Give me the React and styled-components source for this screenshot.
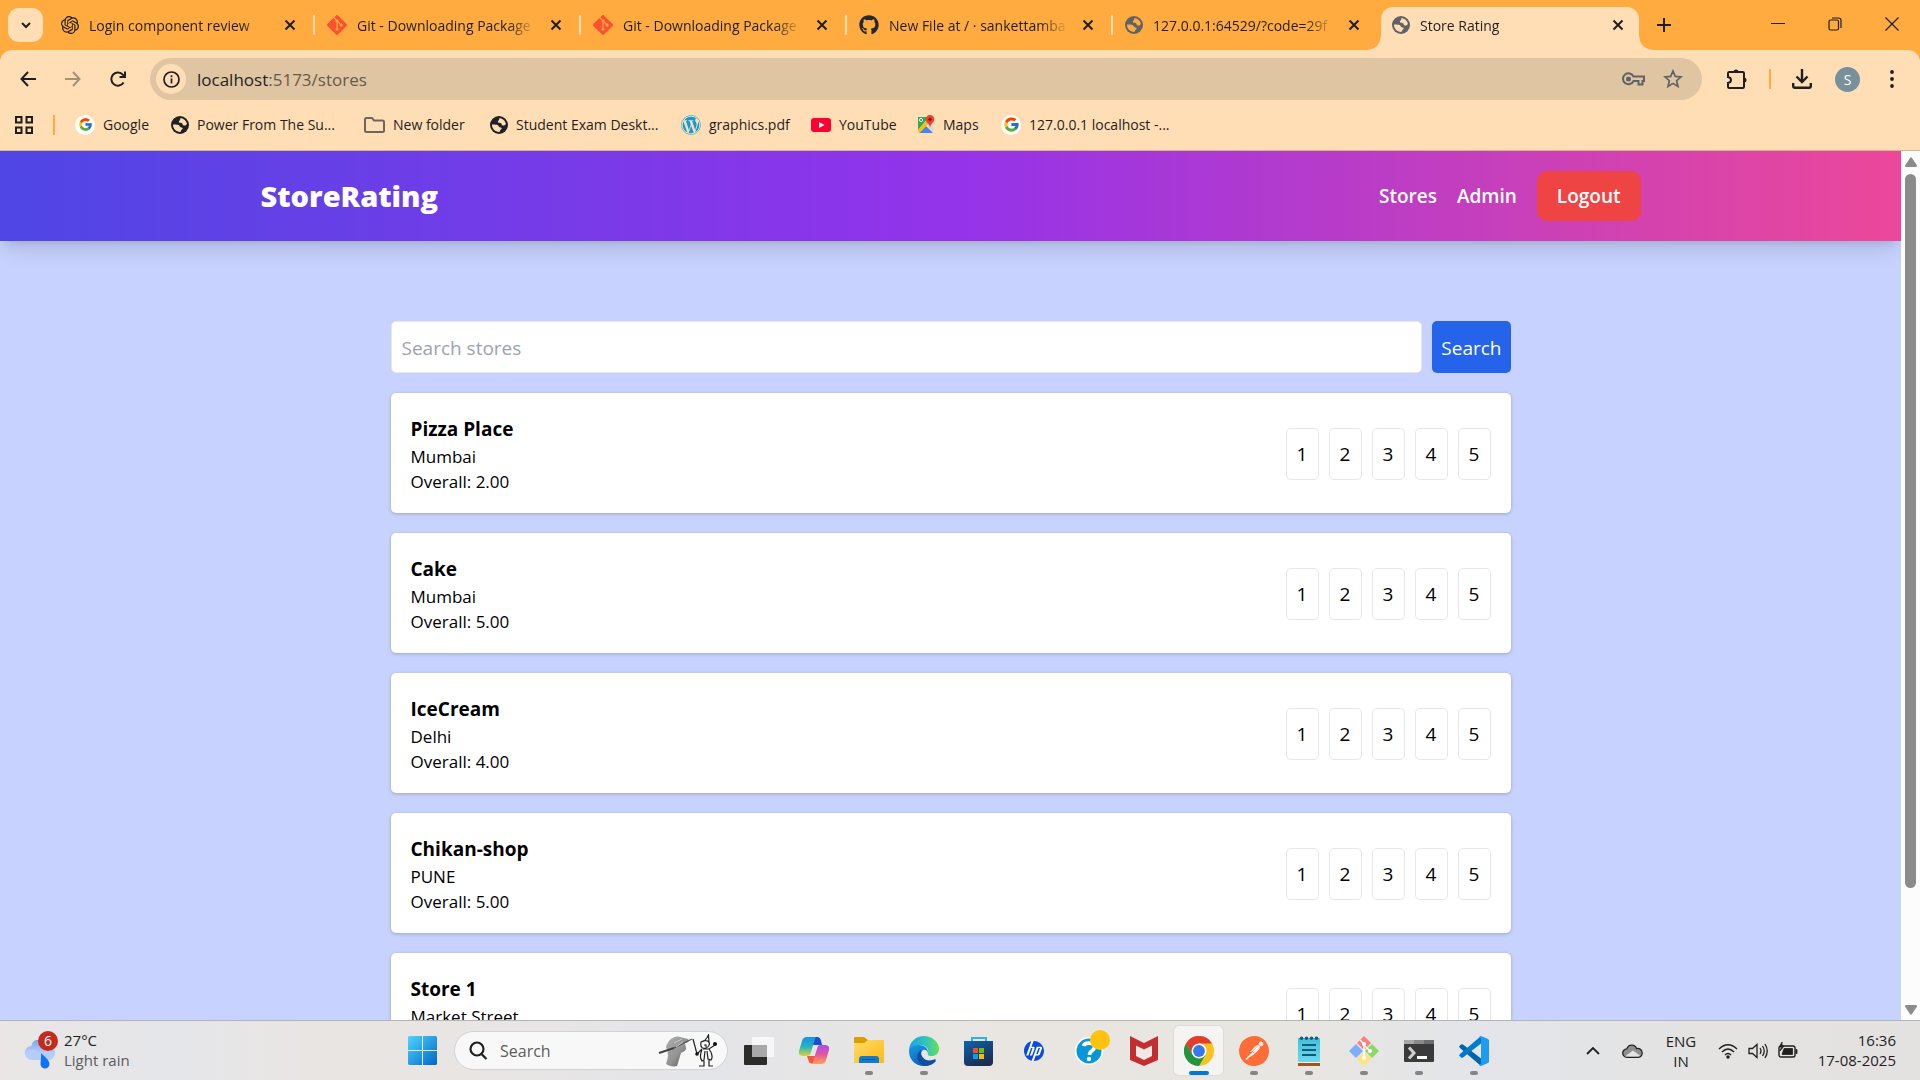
import React from "react";
import styled, { createGlobalStyle } from "styled-components";
import { FcGoogle } from "react-icons/fc";
import { FaGithub, FaWordpress } from "react-icons/fa";
import { SiGit, SiOpenai, SiHp, SiPostman } from "react-icons/si";

const ui = `"Segoe UI", "Open Sans", "Noto Sans", sans-serif`;
const ink = "#1f1f1f";

const GlobalStyle = createGlobalStyle`
  *, *::before, *::after { box-sizing: border-box; }
  body { margin: 0; font-family: ${ui}; color: #000; overflow: hidden; }
  button, input { font: inherit; color: inherit; margin: 0; }
  button { border: 0; background: none; padding: 0; cursor: pointer; }
  a { color: inherit; text-decoration: none; }
  h1, h2, p, ul { margin: 0; padding: 0; }
  ul { list-style: none; }
  svg { display: block; flex: none; }
`;

const Desktop = styled.div`
  display: flex;
  flex-direction: column;
  height: 100vh;
`;

/* ---------- browser tab strip ---------- */
const TabStrip = styled.header`
  display: flex;
  align-items: flex-end;
  flex: none;
  height: 50px;
  padding-left: 8px;
  background: #ffab40;
  color: ${ink};
`;
const TabSearch = styled.button`
  display: grid;
  place-items: center;
  width: 35px;
  height: 34px;
  margin: 0 6px 8px 0;
  border-radius: 11px;
  background: #ffdeb5;
`;
const Tab = styled.div`
  position: relative;
  display: flex;
  align-items: center;
  flex: 0 1 266px;
  min-width: 0;
  height: 43px;
  padding: 0 17px 7px 12px;
  font-size: 14px;
  &::after {
    content: "";
    width: 2px;
    height: 20px;
    border-radius: 1px;
    background: ${(p) => (p.$last ? "transparent" : "#ffdeb5")};
    position: absolute;
    right: 0;
  }
`;
const ActiveTab = styled(Tab)`
  flex: 0 1 258px;
  margin: 0 10px 0 2px;
  padding: 0 13px 7px 11px;
  border-radius: 12px 12px 0 0;
  background: #ffdeb5;
  &::before, &::after {
    content: "";
    position: absolute;
    bottom: 0;
    width: 13px;
    height: 13px;
    border-radius: 0;
  }
  &::before { left: -13px; background: radial-gradient(circle at 0 0, transparent 12px, #ffdeb5 13px); }
  &::after { right: -13px; background: radial-gradient(circle at 100% 0, transparent 12px, #ffdeb5 13px); }
`;
const TabTitle = styled.span`
  flex: 1;
  min-width: 0;
  margin: 0 12px 0 10px;
  overflow: hidden;
  white-space: nowrap;
  -webkit-mask-image: linear-gradient(to right, #000 calc(100% - 28px), transparent);
  mask-image: linear-gradient(to right, #000 calc(100% - 28px), transparent);
`;
const IconButton = styled.button`
  display: grid;
  place-items: center;
  flex: none;
  width: ${(p) => p.$w || 16}px;
  height: ${(p) => p.$h || 20}px;
`;
const WindowControls = styled.div`
  display: flex;
  margin-left: auto;
  height: 50px;
`;

/* ---------- toolbar ---------- */
const ToolbarBack = styled.div`
  flex: none;
  background: #ffab40;
`;
const Toolbar = styled.div`
  border-bottom: 1px solid #d5b68f;
  border-radius: 12px 12px 0 0;
  background: #ffdeb5;
  color: ${ink};
`;
const AddressRow = styled.div`
  display: flex;
  align-items: center;
  height: 58px;
  padding: 0 11px 0 5px;
`;
const AddressBox = styled.div`
  display: flex;
  align-items: center;
  flex: 1;
  height: 42px;
  margin-left: 10px;
  padding: 0 9px 0 6px;
  border-radius: 21px;
  background: #dfc5a2;
`;
const SiteInfo = styled.button`
  display: grid;
  place-items: center;
  width: 30px;
  height: 30px;
  border-radius: 50%;
  background: #ffdeb5;
`;
const Address = styled.div`
  flex: 1;
  padding-left: 11px;
  font-size: 17px;
  span { color: #685a4a; }
`;
const ToolbarActions = styled.div`
  display: flex;
  align-items: center;
  margin-left: 13px;
`;
const Divider = styled.span`
  flex: none;
  width: 2px;
  height: 20px;
  margin: 0 ${(p) => p.$gap}px;
  background: #ffab40;
`;
const Avatar = styled.button`
  width: 25px;
  height: 25px;
  margin: 0 15px 0 12px;
  border-radius: 50%;
  background: #78909c;
  color: #fff;
  font-size: 14px;
  line-height: 25px;
`;
const Bookmarks = styled.nav`
  display: flex;
  align-items: center;
  height: 33px;
  padding-left: 15px;
  margin-bottom: 9px;
  font-size: 14px;
  white-space: nowrap;
`;
const Bookmark = styled.a`
  display: flex;
  align-items: center;
  gap: 8px;
  flex: none;
  width: ${(p) => p.$w}px;
`;
const White = styled.span`
  display: grid;
  place-items: center;
  width: ${(p) => p.$s || 20}px;
  height: ${(p) => p.$s || 20}px;
  border-radius: 50%;
  background: #fff;
`;

/* ---------- page ---------- */
const Viewport = styled.div`
  display: flex;
  flex: 1;
  min-height: 0;
  background: #c7d2fe;
`;
const Page = styled.div`
  flex: 1;
  min-width: 0;
  overflow: hidden;
`;
const NavBar = styled.nav`
  padding: 20px;
  background: linear-gradient(to right, #4f46e5, #9333ea, #ec4899);
  box-shadow: 0 12px 19px -4px rgba(0, 0, 0, 0.12), 0 5px 8px -5px rgba(0, 0, 0, 0.12);
`;
const NavInner = styled.div`
  display: flex;
  align-items: center;
  justify-content: space-between;
  max-width: 1380px;
  margin: 0 auto;
  color: #fff;
`;
const Brand = styled.a`
  font-size: 29px;
  font-weight: 800;
  line-height: 40px;
`;
const NavLinks = styled.div`
  display: flex;
  align-items: center;
  gap: 20px;
  font-size: 19px;
  font-weight: 600;
`;
const Logout = styled.button`
  height: 50px;
  padding: 0 20px;
  border-radius: 10px;
  background: #ef4444;
`;
const Main = styled.main`
  display: grid;
  gap: 20px;
  max-width: 1160px;
  margin: 0 auto;
  padding: 80px 20px 20px;
`;
const SearchForm = styled.form`
  display: flex;
  gap: 10px;
  font-size: 19px;
`;
const SearchInput = styled.input`
  flex: 1;
  min-width: 0;
  height: 52px;
  padding: 1px 10px 0;
  border: 1px solid #e5e7eb;
  border-radius: 5px;
  background: #fff;
  &::placeholder { color: #9ca3af; opacity: 1; }
`;
const SearchButton = styled.button`
  padding: 1px 9px 0;
  border-radius: 5px;
  background: #2563eb;
  color: #fff;
`;
const Card = styled.li`
  display: flex;
  align-items: center;
  justify-content: space-between;
  padding: 21px 20px 19px;
  border-radius: 5px;
  background: #fff;
  box-shadow: 0 1px 4px rgba(0, 0, 0, 0.12), 0 1px 3px rgba(0, 0, 0, 0.1);
`;
const CardList = styled.ul`
  display: grid;
  gap: 20px;
`;
const StoreName = styled.h2`
  font-size: 19px;
  font-weight: 700;
  line-height: 30px;
`;
const StoreLine = styled.p`
  font-size: 17px;
  line-height: 25px;
`;
const Ratings = styled.div`
  display: flex;
  gap: 10px;
`;
const RateButton = styled.button`
  width: 33px;
  height: 52px;
  border: 1px solid #e5e7eb;
  border-radius: 5px;
  font-size: 19px;
`;
const ScrollTrack = styled.div`
  display: flex;
  flex-direction: column;
  align-items: center;
  flex: none;
  width: 19px;
  padding: 6px 0 5px;
  background: #fcfcfc;
`;
const ScrollThumb = styled.div`
  width: 11px;
  flex: 714 1 0;
  margin-top: 7px;
  border-radius: 6px;
  background: #8b8b8b;
`;
const ScrollRest = styled.div`
  flex: 117 1 0;
`;

/* ---------- taskbar ---------- */
const Taskbar = styled.footer`
  display: grid;
  grid-template-columns: 1fr auto 1fr;
  align-items: center;
  flex: none;
  height: 60px;
  padding: 0 24px 0 0;
  border-top: 1px solid #b5b5b5;
  background: linear-gradient(to right, #e9e6e5, #e5e6ea 9%, #e9e5e3 16%, #e9e5e3 24%, #e4e5e9 36%, #e9e6e2 52%, #e8e6e1 68%, #e3e5ea 77%, #e4e3e1 90%, #e3e2e0);
  color: ${ink};
`;
const Weather = styled.button`
  display: flex;
  align-items: center;
  gap: 6px;
  padding: 0 0 2px 24px;
  text-align: left;
  font-size: 15px;
  line-height: 20px;
`;
const Muted = styled.span`
  display: block;
  color: #5c5c5c;
`;
const Apps = styled.div`
  display: flex;
  align-items: center;
`;
const AppButton = styled.button`
  position: relative;
  display: grid;
  place-items: center;
  width: 49px;
  height: 49px;
  margin: 0 3px;
  border-radius: 5px;
  background: ${(p) => (p.$active ? "#f5f4f2" : "transparent")};
  box-shadow: ${(p) => (p.$active ? "0 0 0 1px #dddcda" : "none")};
  &::after {
    content: "";
    position: absolute;
    bottom: 0;
    width: ${(p) => (p.$active ? 20 : p.$open ? 8 : 0)}px;
    height: 4px;
    border-radius: 2px;
    background: ${(p) => (p.$active ? "#0078d4" : "#858585")};
  }
`;
const TaskSearch = styled.label`
  display: flex;
  align-items: center;
  width: 274px;
  height: 39px;
  margin: 0 3px 0 4px;
  padding: 0 9px 0 14px;
  border: 1px solid #d2d2d2;
  border-radius: 20px;
  background: #f8f8f8;
`;
const TaskSearchInput = styled.input`
  flex: 1;
  min-width: 0;
  padding: 0 0 0 12px;
  border: 0;
  background: none;
  font-size: 16px;
  &::placeholder { color: #5c5c5c; opacity: 1; }
`;
const Tray = styled.div`
  display: flex;
  align-items: center;
  justify-content: flex-end;
  font-size: 15px;
  line-height: 20px;
`;
const TrayIcons = styled.div`
  display: flex;
  align-items: center;
  gap: ${(p) => p.$gap}px;
`;
const Language = styled.div`
  width: 44px;
  margin: 0 15px 0 16px;
  text-align: center;
`;
const Clock = styled.time`
  width: 98px;
  padding-bottom: 2px;
  text-align: right;
`;

/* ---------- icons ---------- */
const Line = ({ s = 20, h, w = 2, box = "0 0 20 20", color = "currentColor", children }) => (
  <svg width={s} height={h || s} viewBox={box} fill="none" stroke={color} strokeWidth={w} aria-hidden="true">{children}</svg>
);
const CloseX = () => <Line s={12} box="0 0 12 12"><path d="M1.5 1.5l9 9M10.5 1.5l-9 9" /></Line>;
const Globe = ({ color = "#202124", hole = "#ffdeb5" }) => (
  <svg width="18" height="18" viewBox="0 0 18 18" aria-hidden="true">
    <circle cx="9" cy="9" r="9" fill={color} />
    <path fill={hole} d="M9.600 2c3.300.4 5.700 2.700 6.300 5.800-.5 1.500-1.700 2-3 1.700-1.300-.3-1.100-1.500-1.600-2.100-.8-.9-2.700 0-3.300-1.200-.5-1.100.4-1.700 1-2.300.5-.6.1-1.300.6-1.900zM2 8.600c1.600-.2 4.200-.1 5.600.5 1.200.6.8 1.700 2.100 2.100 1.300.3 2.100.3 2 1.400-.2 1-1.200 1-1.600 1.800-.3.600-.2 1.100-.7 1.600C5.300 16.100 1.900 12.900 2 8.600z" />
  </svg>
);
const GitMark = () => <SiGit size={20} color="#fc5130" />;
const MapsIcon = () => (
  <svg width="18" height="20" viewBox="0 0 18 20" aria-hidden="true">
    <path fill="#34a853" d="M1 2h11L1 15z" /><path fill="#4285f4" d="M2 18l7-7 7 7z" />
    <path fill="#fbbc04" d="M1 15L12 3l2 3L2 18.500z" /><path fill="#d8d8d8" d="M10 10l6-2v9z" />
    <path fill="#ea4335" d="M13 0a4.300 4.300 0 0 1 4.300 4.300C17.300 8 13.500 8 13 13c-.5-5-4.300-5-4.300-8.700A4.300 4.300 0 0 1 13 0z" />
    <circle cx="13" cy="4.300" r="1.600" fill="#811411" /><circle cx="4" cy="5" r="1.600" fill="none" stroke="#fff" />
  </svg>
);
const YouTubeIcon = () => (
  <svg width="20" height="14" viewBox="0 0 20 14" aria-hidden="true"><rect width="20" height="14" rx="3" fill="#ff0033" /><path fill="#fff" d="M8 4l5.500 3L8 10z" /></svg>
);
const Folder = () => <Line s={21} h={16} box="0 0 21 16" color="#6b665f"><path d="M1 2.500C1 1.500 1.500 1 2.500 1H8l2 2.500h8.500c1 0 1.500.5 1.500 1.500v8.500c0 1-.5 1.500-1.500 1.500h-16C1.500 15 1 14.500 1 13.500z" /></Line>;
const AppsIcon = () => <Line s={18} box="0 0 18 18"><path d="M1 1h5.500v5.500H1zM11.500 1H17v5.500h-5.500zM1 11.500h5.500V17H1zM11.500 11.500H17V17h-5.500z" /></Line>;
const WeatherIcon = () => (
  <svg width="34" height="38" viewBox="0 0 34 38" aria-hidden="true">
    <defs><linearGradient id="cl" x2="0" y2="1"><stop stopColor="#7ea8ee" /><stop offset="1" stopColor="#d3e2fb" /></linearGradient></defs>
    <path fill="url(#cl)" d="M8 29a7 7 0 0 1-.6-14C8.500 9 13 8 17 10c4-2 11 1 10.500 6 5 1 5 13-1.500 13z" />
    <path fill="#b5cdf8" d="M1 22c2-5 12-5 16 2 3-4 10-4 13-2 0 4-2 7-5 7H8c-4 0-6-3-7-7z" />
    <path fill="#0f73f5" d="M17 22c3 3 8.500 7 8.500 11a4.500 4.500 0 0 1-9 0c0-3 1-7 .5-11z" />
    <circle cx="24" cy="10" r="10" fill="#c42b1c" />
    <text x="24" y="15" textAnchor="middle" fontSize="14" fill="#fff">6</text>
  </svg>
);
const WindowsIcon = () => (
  <svg width="29" height="29" viewBox="0 0 29 29" aria-hidden="true">
    <defs><linearGradient id="wn" x2="1" y2="1"><stop stopColor="#4fd4ff" /><stop offset="1" stopColor="#0067c8" /></linearGradient></defs>
    <path fill="url(#wn)" d="M1 0h13v14H0V1zM15 0h13l1 1v13H15zM0 15h14v14H1l-1-1zM15 15h14v13l-1 1H15z" />
  </svg>
);
const Sketch = () => (
  <svg width="60" height="34" viewBox="0 0 60 34" aria-hidden="true">
    <defs><linearGradient id="hd" x2="1" y2="1"><stop stopColor="#b0b0b0" /><stop offset=".55" stopColor="#929292" /><stop offset="1" stopColor="#424242" /></linearGradient></defs>
    <path fill="url(#hd)" d="M8 13c2-6 5-10 12-10.500L30 5c2 2 0 4-3 4l1 5c0 3-3 4-5 5l-4 13c-4 1-8 0-11-2 2-5 3-11 0-17z" />
    <path stroke="#444" strokeWidth="2" d="M1 19l15-5" /><path stroke="#555" strokeWidth="1.300" d="M16 14L34 5" />
    <path stroke="#c9c9c9" d="M16 9l8-4M18 13l7-5" fill="none" />
    <g fill="none" stroke="#222" strokeWidth="1.200">
      <path d="M35 5l4 15 5-5M43 8c2 0 5-2 7.500-7l.5 8M43 8c-1 6 2 7 5 6 3-1 4-4 3-6-2-2-6-1-8 0zM46 11h2v2M45 15h6l6-4M44 16c-2 4-2 8 0 11l2-1 1-9M51 15c3 4 4 8 2 11l-3-1-1-8M46 27v5h-5M51 26v6h4" />
    </g>
    <circle cx="39" cy="20" r="1.800" fill="#111" /><circle cx="57" cy="10" r="2" fill="#111" />
  </svg>
);
const TaskView = () => (
  <svg width="30" height="30" viewBox="0 0 30 30" aria-hidden="true">
    <rect x="0" y="9" width="23" height="20" rx="1" fill="#2c2c2a" /><rect x="8" y="1" width="22" height="20" rx="1" fill="#f7f7f7" /><path fill="#a9a9a9" d="M8 9h15v12H8z" />
  </svg>
);
const Copilot = () => (
  <svg width="30" height="28" viewBox="0 0 30 28" aria-hidden="true">
    <defs>
      <linearGradient id="ca" x2="0" y2="1"><stop stopColor="#1693e8" /><stop offset=".5" stopColor="#27b2c0" /><stop offset="1" stopColor="#d8d43a" /></linearGradient>
      <linearGradient id="cb" x2="0" y2="1"><stop stopColor="#a64df0" /><stop offset=".5" stopColor="#e8569b" /><stop offset="1" stopColor="#ffa254" /></linearGradient>
    </defs>
    <path fill="#1b4fd0" d="M13 0h5c3 0 4 2 5 8h-9z" />
    <path fill="#f0593c" d="M8 19h10l-2 6c-1 2-5 2-6 0z" />
    <path fill="url(#ca)" d="M8 0h9c-2 3-3 10-5 15-1 3-2 4-5 4H4c-3 0-5-2-4-5l3-10c1-3 2-4 5-4z" />
    <path fill="url(#cb)" d="M22 8h4c3 0 5 2 4 5l-3 10c-1 3-2 4-5 4h-9c2-3 3-10 5-15 1-3 1-4 4-4z" />
  </svg>
);
const Explorer = () => (
  <svg width="30" height="27" viewBox="0 0 30 27" aria-hidden="true">
    <defs><linearGradient id="fo" x2="1" y2="1"><stop stopColor="#ffdc68" /><stop offset="1" stopColor="#fcb915" /></linearGradient></defs>
    <path fill="#dc9c06" d="M0 1q0-1 1-1h9l4 3h15v7H0z" /><path fill="url(#fo)" d="M0 6h10l4-3h15q1 0 1 1v21q0 1-1 1H0z" />
    <path fill="#117ad1" d="M5 26v-4q0-3 3-3h14q3 0 3 3v4z" /><path fill="#0a4e93" d="M8 22h13v1H8z" />
  </svg>
);
const Edge = () => (
  <svg width="30" height="30" viewBox="0 0 30 30" aria-hidden="true">
    <defs>
      <linearGradient id="ea" x2="1"><stop stopColor="#1ba3e4" /><stop offset=".6" stopColor="#35c6b8" /><stop offset="1" stopColor="#66e14b" /></linearGradient>
      <linearGradient id="eb" x2=".6" y2="1"><stop stopColor="#199be6" /><stop offset="1" stopColor="#0b5cb5" /></linearGradient>
    </defs>
    <path fill="url(#ea)" d="M0 15C0 6 7 0 15 0s15 6 15 13c0 5-4 7-7 7-4 0-5-1-4-3 2-6-7-10-13-7-3 1-5 3-6 5z" />
    <path fill="url(#eb)" d="M0 15C1 10 6 9 10 9c6 0 9 4 9 8-2-5-7-4-7 2 0 5 6 9 13 6h2c-2 3-7 5-12 5C7 30 0 24 0 15z" />
    <path fill="#1150a0" d="M12 14c-6 4-5 13 3 16 5 0 10-3 12-6l-1-1c-8 4-15-1-14-9z" />
  </svg>
);
const StoreIcon = () => (
  <svg width="30" height="30" viewBox="0 0 30 30" aria-hidden="true">
    <defs><linearGradient id="st" x2=".5" y2="1"><stop stopColor="#0e62ad" /><stop offset="1" stopColor="#1c2e52" /></linearGradient></defs>
    <path fill="none" stroke="#2cb3ee" strokeWidth="2" d="M8 6V2h14v4" /><path fill="url(#st)" d="M0 5h29v21q0 4-4 4H4q-4 0-4-4z" />
    <path fill="#f25022" d="M9 12h5v5H9z" /><path fill="#7fba00" d="M15 12h5v5h-5z" /><path fill="#00a4ef" d="M9 18h5v5H9z" /><path fill="#ffb900" d="M15 18h5v5h-5z" />
  </svg>
);
const Help = () => (
  <svg width="42" height="44" viewBox="-4 0 42 44" aria-hidden="true">
    <circle cx="17" cy="22" r="14" fill="#fff" /><circle cx="17" cy="22" r="12.500" fill="#0797d8" />
    <path fill="none" stroke="#fff" strokeWidth="3.600" d="M11.500 17c1-4 11-4 11 1 0 4-5 3-5 8" /><circle cx="17" cy="30" r="2.200" fill="#fff" />
    <circle cx="28" cy="11" r="10" fill="#ffc20e" />
  </svg>
);
const McAfee = () => (
  <svg width="28" height="30" viewBox="0 0 28 30" aria-hidden="true"><path fill="#c32f31" d="M0 0l14 7 14-7v24l-14 6-14-6z" /><path fill="#ece9e6" d="M6 9.500l8 4 8-4V20l-8 4-8-4z" /></svg>
);
const Chrome = () => (
  <svg width="30" height="30" viewBox="0 0 30 30" aria-hidden="true">
    <circle cx="15" cy="15" r="15" fill="#fcc31e" />
    <path fill="#e33b2e" d="M2 7.500A15 15 0 0 1 28 7.500H15L8.500 18.700z" />
    <path fill="#229342" d="M2 7.500A15 15 0 0 0 15 30l6.500-11.200H8.500z" />
    <circle cx="15" cy="15" r="7.500" fill="#fff" /><circle cx="15" cy="15" r="5.900" fill="#3478ec" />
  </svg>
);
const Notepad = () => (
  <svg width="22" height="30" viewBox="0 0 22 30" aria-hidden="true">
    <defs><linearGradient id="np" x2="0" y2="1"><stop stopColor="#3fc1dc" /><stop offset="1" stopColor="#6fd9ee" /></linearGradient></defs>
    <path fill="#a3541c" d="M0 26h22v4H0z" /><path fill="#eee" d="M0 24h22v3H0z" /><rect y="2" width="22" height="24" rx="1" fill="url(#np)" />
    <path stroke="#0b5a7a" strokeWidth="2" d="M4 9h14M4 14h14M4 19h14" />
    <g fill="#155e78"><circle cx="3.500" cy="2.200" r="1.800" /><circle cx="8.500" cy="2.200" r="1.800" /><circle cx="13.500" cy="2.200" r="1.800" /><circle cx="18.500" cy="2.200" r="1.800" /></g>
  </svg>
);
const GitForWindows = () => (
  <svg width="30" height="30" viewBox="0 0 30 30" aria-hidden="true">
    <path fill="#fb7f7f" d="M15 0l7 7-7 7-7-7z" /><path fill="#7eaefb" d="M7 8l7 7-7 7-7-7z" /><path fill="#8fd862" d="M23 8l7 7-7 7-7-7z" /><path fill="#ffe47e" d="M15 16l7 7-7 7-7-7z" />
    <path stroke="#fff" strokeWidth="1.500" fill="none" d="M11 4l4 4v14M15 9l6 6" /><g fill="#fff"><circle cx="15" cy="8" r="2" /><circle cx="21" cy="15" r="2" /><circle cx="15" cy="22" r="2" /></g>
  </svg>
);
const Terminal = () => (
  <svg width="30" height="22" viewBox="0 0 30 22" aria-hidden="true">
    <rect width="30" height="22" rx="1" fill="#3a3a3a" /><path fill="#a8a8a8" d="M0 1q0-1 1-1h19v4H0z" /><path fill="#8a8a8a" d="M10 0h10v4H10z" /><path fill="#6d6d6d" d="M20 0h9q1 0 1 1v3H20z" />
    <path fill="none" stroke="#d0d0d0" strokeWidth="3" d="M5 7.500l5 5.500-5 5.500" /><path fill="#fff" d="M13 16h10v3H13z" />
  </svg>
);
const VSCode = () => (
  <svg width="30" height="30" viewBox="0 0 30 30" aria-hidden="true">
    <path fill="#0065a9" d="M0 10.500l2-2q1-.7 2 0l18 14V30L1 12z" /><path fill="#007acc" d="M0 19.500l2 2q1 .7 2 0L22 7.500V0L1 18z" /><path fill="#1f9cf0" d="M22 0l7 3q1 .5 1 1.500v21q0 1-1 1.500l-7 3q-2 0-2-2 2 1 2-1V3q0-2-2-1 0-2 2-2z" />
  </svg>
);

/* ---------- content ---------- */
const tabs = [
  { title: "Login component review", icon: <SiOpenai size={18} /> },
  { title: "Git - Downloading Package", icon: <GitMark /> },
  { title: "Git - Downloading Package", icon: <GitMark /> },
  { title: "New File at / · sankettamba", icon: <FaGithub size={20} color="#24292f" /> },
  { title: "127.0.0.1:64529/?code=29f", icon: <Globe color="#5f6368" hole="#ffab40" /> },
];
const bookmarks = [
  { label: "Google", w: 96, icon: <White><FcGoogle size={15} /></White> },
  { label: "Power From The Su...", w: 193, icon: <Globe /> },
  { label: "New folder", w: 126, icon: <Folder /> },
  { label: "Student Exam Deskt...", w: 191, icon: <Globe /> },
  { label: "graphics.pdf", w: 130, icon: <FaWordpress size={20} color="#0f9bd7" /> },
  { label: "YouTube", w: 106, icon: <YouTubeIcon /> },
  { label: "Maps", w: 84, icon: <MapsIcon /> },
  { label: "127.0.0.1 localhost -...", w: 180, icon: <White><FcGoogle size={17} /></White> },
];
const stores = [
  { name: "Pizza Place", city: "Mumbai", overall: "2.00" },
  { name: "Cake", city: "Mumbai", overall: "5.00" },
  { name: "IceCream", city: "Delhi", overall: "4.00" },
  { name: "Chikan-shop", city: "PUNE", overall: "5.00" },
  { name: "Store 1", city: "Market Street", overall: "4.00" },
];
const apps = [
  { name: "Task view", icon: <TaskView /> },
  { name: "Copilot", icon: <Copilot /> },
  { name: "File Explorer", icon: <Explorer />, open: true },
  { name: "Edge", icon: <Edge />, open: true },
  { name: "Microsoft Store", icon: <StoreIcon /> },
  { name: "HP", icon: <White><SiHp size={20} color="#0b4be0" /></White> },
  { name: "Help", icon: <Help /> },
  { name: "McAfee", icon: <McAfee /> },
  { name: "Chrome", icon: <Chrome />, active: true },
  { name: "Postman", icon: <White $s={29}><SiPostman size={30} color="#ff6c37" /></White>, open: true },
  { name: "Notepad", icon: <Notepad />, open: true },
  { name: "Git Bash", icon: <GitForWindows />, open: true },
  { name: "Terminal", icon: <Terminal />, open: true },
  { name: "Visual Studio Code", icon: <VSCode />, open: true },
];

function StoreCard({ name, city, overall }) {
  return (
    <Card>
      <div>
        <StoreName>{name}</StoreName>
        <StoreLine>{city}</StoreLine>
        <StoreLine>Overall: {overall}</StoreLine>
      </div>
      <Ratings>
        {[1, 2, 3, 4, 5].map((n) => <RateButton key={n} type="button">{n}</RateButton>)}
      </Ratings>
    </Card>
  );
}

export default function App() {
  return (
    <Desktop>
      <GlobalStyle />
      <TabStrip>
        <TabSearch aria-label="Search tabs"><Line s={12} box="0 0 12 12"><path d="M2 4l4 4 4-4" /></Line></TabSearch>
        {tabs.map((t, i) => (
          <Tab key={i} $last={i === tabs.length - 1}>
            {t.icon}
            <TabTitle>{t.title}</TabTitle>
            <IconButton aria-label="Close tab"><CloseX /></IconButton>
          </Tab>
        ))}
        <ActiveTab>
          <Globe color="#5f6368" />
          <TabTitle>Store Rating</TabTitle>
          <IconButton aria-label="Close tab"><CloseX /></IconButton>
        </ActiveTab>
        <IconButton aria-label="New tab" $w={30} $h={50}><Line s={14} box="0 0 14 14"><path d="M7 0v14M0 7h14" /></Line></IconButton>
        <WindowControls>
          <IconButton aria-label="Minimise" $w={57} $h={48}><Line s={14} w={1} box="0 0 14 14"><path d="M0 6.500h14" /></Line></IconButton>
          <IconButton aria-label="Restore" $w={57} $h={48}><Line s={14} w={1.200} box="0 0 14 14"><rect x="1" y="3" width="9.500" height="10" rx="1.500" /><path d="M4 1h6.500Q13 1 13 3.500V11" /></Line></IconButton>
          <IconButton aria-label="Close" $w={57} $h={48}><Line s={14} w={1.200} box="0 0 14 14"><path d="M.5.5l13 13M13.500.5l-13 13" /></Line></IconButton>
        </WindowControls>
      </TabStrip>

      <ToolbarBack>
        <Toolbar>
          <AddressRow>
            <IconButton aria-label="Back" $w={45} $h={40}><Line s={16} box="0 0 16 16"><path d="M16 8H1.500M8 1L1.500 8 8 15" /></Line></IconButton>
            <IconButton aria-label="Forward" $w={45} $h={40}><Line s={16} box="0 0 16 16" color="#a49178"><path d="M0 8h14.500M8 1l6.500 7L8 15" /></Line></IconButton>
            <IconButton aria-label="Reload" $w={45} $h={40}><Line s={16} box="0 0 16 16"><path d="M13.600 11.500A6.600 6.600 0 1 1 13 3.800L14.500 5.500M15 .5V6H9.500" /></Line></IconButton>
            <AddressBox>
              <SiteInfo aria-label="Site information"><Line s={17} w={1.700} box="0 0 17 17"><circle cx="8.500" cy="8.500" r="7.500" /><path d="M8.500 7.500v5M8.500 4.300v2" /></Line></SiteInfo>
              <Address>localhost<span>:5173/stores</span></Address>
              <IconButton aria-label="Passwords" $w={40} $h={30}><Line s={23} h={14} box="0 0 23 14" color="#5f6368"><path d="M11.500 4.500H22v4.500h-1.500v3.500h-4V9h-5A5.500 5.500 0 1 1 11.500 4.500z" /><circle cx="6.500" cy="7" r="1.500" fill="#5f6368" /></Line></IconButton>
              <IconButton aria-label="Bookmark" $w={40} $h={30}><Line s={20} w={1.700} color="#5f6368"><path d="M10 2l2.300 5.400 5.700.5-4.400 3.800 1.400 5.800-5-3.100-5 3.100 1.400-5.800L2 7.900l5.700-.5z" /></Line></IconButton>
            </AddressBox>
            <ToolbarActions>
              <IconButton aria-label="Extensions" $w={44} $h={40}><Line s={22} box="0 0 22 22"><path d="M2 5.200Q2 4 3.200 4h13.600Q18 4 18 5.200v13.600q0 1.200-1.200 1.200H3.200Q2 20 2 18.800V15q3-.4 3-3T2 9z" /><path fill="currentColor" stroke="none" d="M7.500 4a2.500 2.500 0 0 1 5 0zM18 9.500a2.500 2.500 0 0 1 0 5z" /></Line></IconButton>
              <Divider $gap={10} />
              <IconButton aria-label="Downloads" $w={42} $h={40}><Line s={20} w={2.400}><path d="M10 0v12M4.500 7.500L10 13l5.500-5.500M1.200 14v3q0 1.800 1.800 1.800h14q1.800 0 1.800-1.800v-3" /></Line></IconButton>
              <Avatar aria-label="Profile">S</Avatar>
              <IconButton aria-label="Menu" $w={34} $h={40}><svg width="4" height="18" viewBox="0 0 4 18" fill="currentColor"><circle cx="2" cy="2" r="1.900" /><circle cx="2" cy="9" r="1.900" /><circle cx="2" cy="16" r="1.900" /></svg></IconButton>
            </ToolbarActions>
          </AddressRow>
          <Bookmarks>
            <IconButton aria-label="Apps" $w={18}><AppsIcon /></IconButton>
            <Divider $gap={20} />
            {bookmarks.map((b) => <Bookmark key={b.label} href="#" $w={b.w}>{b.icon}{b.label}</Bookmark>)}
          </Bookmarks>
        </Toolbar>
      </ToolbarBack>

      <Viewport>
        <Page>
          <NavBar>
            <NavInner>
              <Brand href="#">StoreRating</Brand>
              <NavLinks>
                <a href="#stores">Stores</a>
                <a href="#admin">Admin</a>
                <Logout>Logout</Logout>
              </NavLinks>
            </NavInner>
          </NavBar>
          <Main>
            <SearchForm onSubmit={(e) => e.preventDefault()}>
              <SearchInput aria-label="Search stores" placeholder="Search stores" />
              <SearchButton>Search</SearchButton>
            </SearchForm>
            <CardList>{stores.map((s) => <StoreCard key={s.name} {...s} />)}</CardList>
          </Main>
        </Page>
        <ScrollTrack>
          <svg width="12" height="10" viewBox="0 0 12 10"><path fill="#8b8b8b" d="M5 1q1-1.500 2 0l5 7.500q0 1.500-1 1.500H1q-1 0-1-1.500z" /></svg>
          <ScrollThumb />
          <ScrollRest />
          <svg width="12" height="10" viewBox="0 0 12 10"><path fill="#8b8b8b" d="M5 9q1 1.500 2 0l5-7.500Q12 0 11 0H1Q0 0 0 1.500z" /></svg>
        </ScrollTrack>
      </Viewport>

      <Taskbar>
        <Weather>
          <WeatherIcon />
          <span>27°C<Muted>Light rain</Muted></span>
        </Weather>
        <Apps>
          <AppButton aria-label="Start"><WindowsIcon /></AppButton>
          <TaskSearch>
            <Line s={19} box="0 0 19 19" w={2.200}><circle cx="8" cy="8" r="6.500" /><path d="M12.500 13l5 5" /></Line>
            <TaskSearchInput aria-label="Search Windows" placeholder="Search" />
            <Sketch />
          </TaskSearch>
          {apps.map((a) => <AppButton key={a.name} aria-label={a.name} $open={a.open} $active={a.active}>{a.icon}</AppButton>)}
        </Apps>
        <Tray>
          <TrayIcons $gap={22}>
            <Line s={14} h={8} w={1.800} box="0 0 14 8"><path d="M1 7l6-6 6 6" /></Line>
            <svg width="21" height="14" viewBox="0 0 21 14"><path fill="#8f8f8f" stroke="#222" strokeWidth="1.300" d="M5 13.300a4.200 4.200 0 0 1-.2-8.400C6.500 0 13 0 14.500 4.500c7-.5 7.500 8.800 1.500 8.800z" /><path fill="#e4e4e4" d="M3 12.500l8-6 7 5q-1 1-2 1z" /></svg>
          </TrayIcons>
          <Language>ENG<br />IN</Language>
          <TrayIcons $gap={10}>
            <Line w={1.500}><path d="M1 8q9-8.500 18 0M4 11q6-6 12 0M7 14q3-3 6 0" /><circle cx="10" cy="16" r="1" fill="currentColor" /></Line>
            <Line w={1.300}><path d="M1 7.500h3.500L9 3.500v13l-4.500-4H1zM12 7q2 3 0 6M14.500 5q3.500 5 0 10M17 3q4.500 7 0 14" /></Line>
            <Line w={1.400}><rect x="1" y="5" width="16" height="11" rx="2" /><path fill="currentColor" d="M4 13.500l2-6h8.500v6zM18 8.500h1v4h-1zM4 1L1.500 6h2L2 10l4-5H4z" strokeWidth=".8" /></Line>
          </TrayIcons>
          <Clock>16:36<br />17-08-2025</Clock>
        </Tray>
      </Taskbar>
    </Desktop>
  );
}
